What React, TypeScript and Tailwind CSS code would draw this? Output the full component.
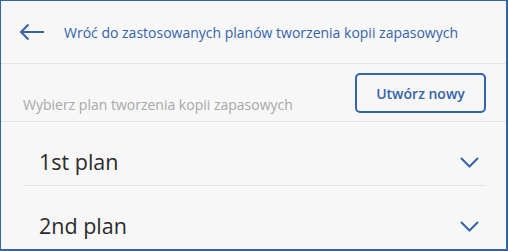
import React from 'react';

const plans = ['1st plan', '2nd plan'];

function ArrowLeft() {
    return (
        <svg width="26" height="18" viewBox="0 0 26 18" fill="none">
            <path d="M25 9H2M9.5 1.5L2 9l7.5 7.5" stroke="#3563a9" strokeWidth="2" />
        </svg>
    );
}

function Chevron() {
    return (
        <svg width="19" height="11" viewBox="0 0 19 11" fill="none">
            <path d="M1 1l8.5 8.5L18 1" stroke="#3563a9" strokeWidth="2" />
        </svg>
    );
}

export default function App() {
    return (
        <div
            className="w-[508px] h-[251px] overflow-hidden bg-[#f7f7f7] border-t border-l border-b-2 border-r-2 border-[#3563a9] flex flex-col"
            style={{ fontFamily: '"Open Sans", sans-serif' }}
        >
            {/* header */}
            <div className="h-[63px] shrink-0 flex items-center border-b border-[#e4e4e4] pl-[18px]">
                <ArrowLeft />
                <span className="ml-[19px] text-[14px] text-[#3563a9]">
                    Wróć do zastosowanych planów tworzenia kopii zapasowych
                </span>
            </div>

            {/* toolbar */}
            <div className="h-[58px] shrink-0 flex items-end justify-between border-b border-[#e4e4e4] pl-[22px] pr-[20px] pb-[8px]">
                <span className="text-[14px] text-[#a8a8a8] leading-none mb-[1px]">
                    Wybierz plan tworzenia kopii zapasowych
                </span>
                <button className="w-[131px] h-[40px] rounded-[5px] border-2 border-[#3563a9] text-[14px] font-semibold text-[#3563a9]">
                    Utwórz nowy
                </button>
            </div>

            {/* plans */}
            <div className="px-[22px] pr-[20px]">
                {plans.map((p) => (
                    <div key={p} className="h-[64px] pt-[18px] flex items-center justify-between border-b border-[#e4e4e4] pl-[16px] pr-[7px]">
                        <span className="text-[21.5px] text-[#2b2b2b]">{p}</span>
                        <Chevron />
                    </div>
                ))}
            </div>
        </div>
    );
}
